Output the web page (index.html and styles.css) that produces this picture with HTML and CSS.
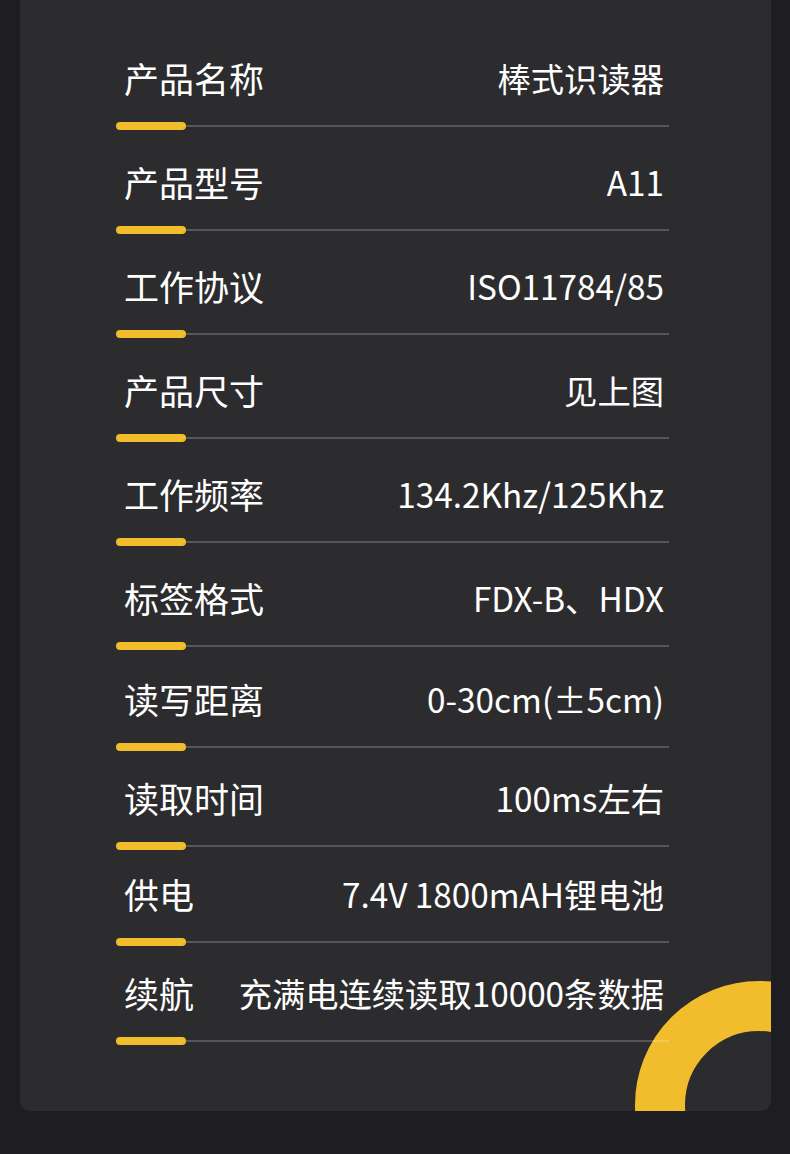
FILE: index.html
```html
<!DOCTYPE html>
<html lang="zh-CN">
<head>
<meta charset="utf-8">
<title>产品参数</title>
<link rel="stylesheet" href="styles.css">
</head>
<body>
<div class="card">
  <div class="ring"></div>
  <div class="specs">
    <div class="row"><div class="line"><span class="label">产品名称</span><span class="value">棒式识读器</span></div><div class="divider"><span class="bar"></span><span class="rule"></span></div></div>
    <div class="row"><div class="line"><span class="label">产品型号</span><span class="value">A11</span></div><div class="divider"><span class="bar"></span><span class="rule"></span></div></div>
    <div class="row"><div class="line"><span class="label">工作协议</span><span class="value">ISO11784/85</span></div><div class="divider"><span class="bar"></span><span class="rule"></span></div></div>
    <div class="row"><div class="line"><span class="label">产品尺寸</span><span class="value">见上图</span></div><div class="divider"><span class="bar"></span><span class="rule"></span></div></div>
    <div class="row"><div class="line"><span class="label">工作频率</span><span class="value">134.2Khz/125Khz</span></div><div class="divider"><span class="bar"></span><span class="rule"></span></div></div>
    <div class="row"><div class="line"><span class="label">标签格式</span><span class="value">FDX-B、HDX</span></div><div class="divider"><span class="bar"></span><span class="rule"></span></div></div>
    <div class="row"><div class="line"><span class="label">读写距离</span><span class="value">0-30cm(±5cm)</span></div><div class="divider"><span class="bar"></span><span class="rule"></span></div></div>
    <div class="row"><div class="line"><span class="label">读取时间</span><span class="value">100ms左右</span></div><div class="divider"><span class="bar"></span><span class="rule"></span></div></div>
    <div class="row"><div class="line"><span class="label">供电</span><span class="value">7.4V 1800mAH锂电池</span></div><div class="divider"><span class="bar"></span><span class="rule"></span></div></div>
    <div class="row"><div class="line"><span class="label">续航</span><span class="value">充满电连续读取10000条数据</span></div><div class="divider"><span class="bar"></span><span class="rule"></span></div></div>
  </div>
</div>
</body>
</html>
```
FILE: styles.css
```css
html, body {
  margin: 0;
  padding: 0;
  background: #1e1e22;
}
body {
  width: 790px;
  height: 1154px;
  overflow: hidden;
  font-family: "Noto Sans CJK SC", "Noto Sans", sans-serif;
}
.card {
  position: relative;
  margin-left: 20px;
  width: 751px;
  height: 1111px;
  background: #2c2c2e;
  border-radius: 0 0 10px 10px;
  overflow: hidden;
}
.ring {
  position: absolute;
  left: 615px;
  top: 981px;
  width: 248px;
  height: 248px;
  box-sizing: border-box;
  border: 50px solid #f2bd2c;
  border-radius: 50%;
}
.specs {
  position: relative;
  z-index: 1;
  padding: 58px 0 0 96px;
  width: 553px;
}
.row {
  padding-bottom: 32px;
}
.row:nth-child(7) { margin-top: -3px; }
.row:nth-child(8) { margin-top: -5px; }
.row:nth-child(9) { margin-top: -8px; }
.row:nth-child(10) { margin-top: -5px; }
.line {
  display: flex;
  justify-content: space-between;
  align-items: center;
  height: 40px;
  padding: 0 5px 0 8px;
  color: #ffffff;
  line-height: 40px;
  white-space: nowrap;
}
.label {
  font-size: 35px;
}
.value {
  font-size: 33.3px;
}
.divider {
  display: flex;
  align-items: center;
  margin-top: 24px;
  height: 8px;
}
.bar {
  width: 70px;
  height: 8px;
  border-radius: 4px;
  background: #f2bd2c;
  flex: none;
}
.rule {
  flex: 1;
  height: 2px;
  background: rgba(255, 255, 255, 0.2);
}
```
